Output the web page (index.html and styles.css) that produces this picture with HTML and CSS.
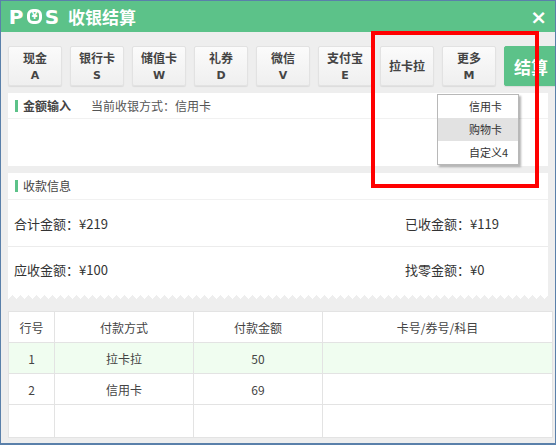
FILE: index.html
```html
<!DOCTYPE html>
<html lang="zh-CN">
<head>
<meta charset="utf-8">
<title>POS收银结算</title>
<link rel="stylesheet" href="styles.css">
</head>
<body>
<div class="window">
  <div class="titlebar">
    <div class="logo"><span class="en">P</span><span class="o"><span>¥</span></span><span class="en">S</span><span class="cn">收银结算</span></div>
    <span class="close">×</span>
  </div>
  <div class="content">
    <div class="paybar">
      <div class="pbtn"><span class="lbl">现金</span><span class="key">A</span></div>
      <div class="pbtn"><span class="lbl">银行卡</span><span class="key">S</span></div>
      <div class="pbtn"><span class="lbl">储值卡</span><span class="key">W</span></div>
      <div class="pbtn"><span class="lbl">礼券</span><span class="key">D</span></div>
      <div class="pbtn"><span class="lbl">微信</span><span class="key">V</span></div>
      <div class="pbtn"><span class="lbl">支付宝</span><span class="key">E</span></div>
      <div class="pbtn single"><span class="lbl">拉卡拉</span></div>
      <div class="pbtn"><span class="lbl">更多</span><span class="key">M</span></div>
      <div class="pbtn settle">结算</div>
    </div>

    <section class="panel amount">
      <div class="panel-head">
        <span class="head-title">金额输入</span>
        <span class="current">当前收银方式：信用卡</span>
      </div>
      <div class="amount-body"></div>
    </section>

    <section class="panel info">
      <div class="panel-head small">
        <span class="head-title light">收款信息</span>
      </div>
      <div class="info-row">
        <span>合计金额：¥219</span>
        <span class="right">已收金额：¥119</span>
      </div>
      <div class="info-row last">
        <span>应收金额：¥100</span>
        <span class="right">找零金额：¥0</span>
      </div>
      <div class="zigzag"></div>
    </section>

    <table class="grid">
      <colgroup><col class="c1"><col class="c2"><col class="c3"><col class="c4"></colgroup>
      <thead>
        <tr><th>行号</th><th>付款方式</th><th>付款金额</th><th>卡号/券号/科目</th></tr>
      </thead>
      <tbody>
        <tr class="sel"><td>1</td><td>拉卡拉</td><td>50</td><td></td></tr>
        <tr><td>2</td><td>信用卡</td><td>69</td><td></td></tr>
        <tr class="empty"><td></td><td></td><td></td><td></td></tr>
      </tbody>
    </table>
  </div>

  <ul class="dropdown">
    <li>信用卡</li>
    <li class="hover">购物卡</li>
    <li>自定义4</li>
  </ul>
  <div class="annot"></div>
</div>
</body>
</html>
```
FILE: styles.css
```css
* { box-sizing: border-box; }
html, body { margin: 0; padding: 0; }
body {
  font-family: "Noto Sans CJK SC", "Noto Sans", sans-serif;
  color: #333;
  background: #fff;
}
.window {
  position: relative;
  width: 556px;
  height: 445px;
  border: 1px solid #5a80aa;
  border-bottom-width: 2px;
  background: #eeeeee;
  overflow: hidden;
}
.titlebar {
  height: 31px;
  background: #5cc289;
  display: flex;
  align-items: center;
  justify-content: space-between;
  padding: 0 8px 0 9px;
  color: #fff;
}
.logo {
  display: flex;
  align-items: center;
  font-weight: bold;
}
.logo .en {
  font-family: "DejaVu Sans", sans-serif;
  font-size: 20px;
  line-height: 20px;
  display: inline-flex;
  justify-content: center;
  width: 12px;
}
.logo .o {
  display: inline-flex;
  align-items: center;
  justify-content: center;
  width: 15px;
  height: 15px;
  border: 3px solid #fff;
  border-radius: 6px;
  margin: 0 4px 0 5px;
}
.logo .o span {
  font-size: 8px;
  line-height: 8px;
  font-family: "DejaVu Sans", sans-serif;
}
.logo .cn {
  font-size: 17px;
  line-height: 20px;
  margin-left: 10px;
}
.close {
  font-size: 20px;
  font-weight: bold;
  line-height: 20px;
  font-family: "DejaVu Sans", sans-serif;
}
.content {
  padding-left: 7px;
}
.paybar {
  display: flex;
  gap: 8px;
  margin-top: 14px;
  height: 40px;
}
.pbtn {
  flex: 0 0 54px;
  height: 40px;
  display: flex;
  flex-direction: column;
  align-items: center;
  justify-content: center;
  background: linear-gradient(#fbfbfb, #efefef);
  border: 1px solid #e2e2e2;
  border-radius: 2px;
  box-shadow: 0 1px 1px rgba(0,0,0,0.08);
  color: #444;
}
.pbtn .lbl {
  font-size: 12px;
  line-height: 16px;
  font-weight: bold;
}
.pbtn .key {
  font-size: 11px;
  line-height: 14px;
  margin-top: 3px;
  font-weight: bold;
  font-family: "DejaVu Sans", sans-serif;
}
.pbtn.settle {
  background: #5cc289;
  border-color: #5cc289;
  color: #fff;
  font-size: 17px;
  font-weight: bold;
  align-items: flex-start;
  padding-left: 9px;
}
.panel {
  width: 540px;
  background: #fff;
}
.amount {
  margin-top: 7px;
}
.panel-head {
  height: 26px;
  display: flex;
  align-items: center;
  border-bottom: 1px solid #f1f1f1;
  padding-left: 7px;
  font-size: 12px;
}
.panel-head.small { height: 27px; }
.head-title {
  border-left: 3px solid #5cc289;
  padding-left: 5px;
  line-height: 12px;
  font-weight: bold;
  color: #444;
}
.head-title.light { font-weight: normal; }
.current {
  margin-left: 20px;
  color: #555;
}
.amount-body {
  height: 47px;
}
.info {
  margin-top: 7px;
}
.info-row {
  height: 47px;
  display: flex;
  align-items: center;
  padding-left: 6px;
  font-size: 13px;
  border-bottom: 1px solid #ececec;
}
.info-row .right {
  margin-left: auto;
  width: 143px;
}
.info-row.last {
  border-bottom: 0;
  height: 44px;
}
.zigzag {
  height: 8px;
  background:
    linear-gradient(135deg, #fff 50%, transparent 50%) 0 0 / 8px 8px repeat-x,
    linear-gradient(225deg, #fff 50%, transparent 50%) 0 0 / 8px 8px repeat-x,
    #eeeeee;
}
.grid {
  margin-top: 12px;
  width: 545px;
  border-collapse: collapse;
  background: #fff;
  font-size: 12px;
  table-layout: fixed;
}
.grid .c1 { width: 46px; }
.grid .c2 { width: 139px; }
.grid .c3 { width: 129px; }
.grid th, .grid td {
  border: 1px solid #e3e3e3;
  text-align: center;
  font-weight: normal;
  height: 31px;
  padding: 0;
  color: #444;
}
.grid tr.sel td { background: #f0fdf0; }
.grid tr.empty td { height: 33px; }
.dropdown {
  position: absolute;
  left: 436px;
  top: 93px;
  width: 82px;
  margin: 0;
  padding: 0;
  list-style: none;
  background: #fff;
  border: 1px solid #b8b8b8;
  box-shadow: 2px 2px 2px rgba(0,0,0,0.3);
}
.dropdown li {
  height: 23px;
  line-height: 23px;
  font-size: 11px;
  padding-left: 31px;
  color: #333;
}
.dropdown li.hover { background: #e2e2e2; }
.annot {
  position: absolute;
  left: 370px;
  top: 30px;
  width: 168px;
  height: 157px;
  border: 4px solid #f00;
}
```
